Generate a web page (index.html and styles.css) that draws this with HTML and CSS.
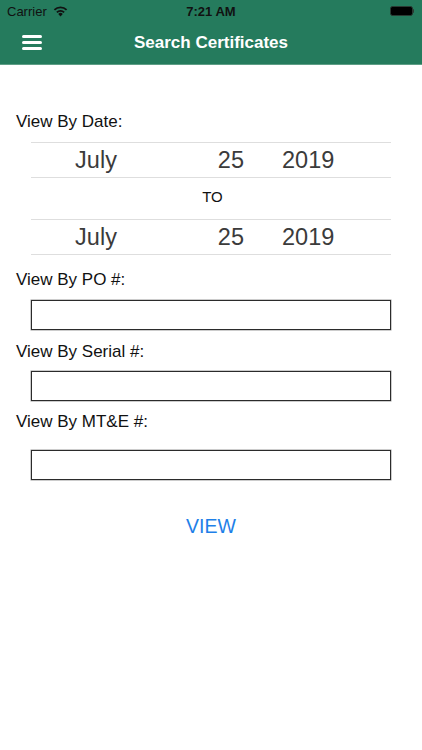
FILE: index.html
```html
<!DOCTYPE html>
<html lang="en">
<head>
    <meta charset="UTF-8">
    <meta name="viewport" content="width=device-width, initial-scale=1.0">
    <title>Search Certificates</title>
    <link rel="stylesheet" href="styles.css">
</head>
<body>

    <!-- Green header with status bar and nav -->
    <header class="app-header">
        <div class="status-bar">
            <div class="carrier">
                Carrier
                <svg class="wifi" width="15" height="11" viewBox="0 0 14 10">
                    <path d="M7 9.6 L4.9 7.3 A3 3 0 0 1 9.1 7.3 Z" fill="#111"/>
                    <path d="M3.6 5.9 A4.9 4.9 0 0 1 10.4 5.9" stroke="#111" stroke-width="1.7" fill="none"/>
                    <path d="M1.3 3.5 A8.2 8.2 0 0 1 12.7 3.5" stroke="#111" stroke-width="1.7" fill="none"/>
                </svg>
            </div>
            <div class="time">7:21 AM</div>
            <div class="battery">
                <span class="battery-body"></span>
                <span class="battery-nub"></span>
            </div>
        </div>
        <nav class="nav-bar">
            <button class="menu-button" type="button">
                <span></span><span></span><span></span>
            </button>
            <h1>Search Certificates</h1>
        </nav>
    </header>

    <main class="search-form">
        <p class="field-label date-label">View By Date:</p>

        <div class="date-picker">
            <div class="picker-row">
                <span class="month">July</span>
                <span class="day">25</span>
                <span class="year">2019</span>
            </div>
            <div class="picker-to">TO</div>
            <div class="picker-row">
                <span class="month">July</span>
                <span class="day">25</span>
                <span class="year">2019</span>
            </div>
        </div>

        <p class="field-label po-label">View By PO #:</p>
        <input class="text-box" type="text">

        <p class="field-label serial-label">View By Serial #:</p>
        <input class="text-box" type="text">

        <p class="field-label mte-label">View By MT&amp;E #:</p>
        <input class="text-box" type="text">

        <button class="view-button" type="button">VIEW</button>
    </main>

</body>
</html>
```

FILE: styles.css
```css
/* Basic reset */
* {
    margin: 0;
    padding: 0;
    box-sizing: border-box;
}

body {
    font-family: 'Liberation Sans', Arial, sans-serif;
    background-color: #fff;
    color: #000;
    width: 422px;
    height: 750px;
    overflow: hidden;
}

/* Header */
.app-header {
    background-color: #257B5D;
    height: 65px;
    border-bottom: 1px solid #5e9e86;
}

.status-bar {
    height: 22px;
    display: grid;
    grid-template-columns: 1fr auto 1fr;
    align-items: center;
    padding: 0 7px;
    font-size: 13px;
    color: #111;
}

.carrier {
    display: flex;
    align-items: center;
    gap: 6px;
}

.time {
    font-weight: bold;
    font-size: 13px;
}

.battery {
    justify-self: end;
    display: flex;
    align-items: center;
    padding-right: 1px;
}

.battery-body {
    width: 23px;
    height: 10px;
    background-color: #000;
    border: 1px solid #2a3a33;
    border-radius: 2.5px;
}

.battery-nub {
    width: 1.5px;
    height: 4px;
    background-color: #2a3a33;
    border-radius: 0 1px 1px 0;
}

.nav-bar {
    height: 42px;
    display: flex;
    align-items: center;
    justify-content: center;
    position: relative;
}

.nav-bar h1 {
    color: #fff;
    font-size: 17px;
    font-weight: bold;
    margin-top: 0;
}

/* Hamburger sits over the bar on the left */
.menu-button {
    position: absolute;
    left: 22px;
    top: 13px;
    width: 20px;
    display: flex;
    flex-direction: column;
    gap: 3px;
    background: none;
    border: none;
}

.menu-button span {
    display: block;
    height: 3px;
    background-color: #fff;
    border-radius: 1.5px;
}

/* Form area */
.search-form {
    padding: 0 31px 0 16px;
    display: flex;
    flex-direction: column;
}

.field-label {
    font-size: 17px;
    line-height: 20px;
    color: #111;
}

.date-label {
    margin-top: 47px;
}

.date-picker {
    margin: 10px 0 0 15px;
}

.picker-row {
    display: grid;
    grid-template-columns: 130px 83px 1fr;
    height: 36px;
    align-items: center;
    border-top: 1px solid #dedede;
    border-bottom: 1px solid #dedede;
    font-size: 23.5px;
    color: #3b3b3b;
}

.picker-row .month {
    text-align: center;
}

.picker-row .day {
    text-align: right;
}

.picker-row .year {
    padding-left: 38px;
}

.picker-to {
    height: 41px;
    display: flex;
    align-items: center;
    justify-content: center;
    font-size: 15px;
    color: #111;
    margin: -2px 0 2px 3px;
}

.po-label {
    margin-top: 15px;
}

.text-box {
    margin: 10px 0 0 15px;
    height: 30px;
    border: 1px solid #2b2b2b;
    box-shadow: 0 0 0 0.5px #9a9a9a;
    font-size: 16px;
    padding: 0 6px;
    background-color: #fff;
    outline: none;
}

.serial-label {
    margin-top: 12px;
}

.serial-label + .text-box {
    margin-top: 9px;
}

.mte-label {
    margin-top: 11px;
}

.mte-label + .text-box {
    margin-top: 18px;
}

.view-button {
    margin: 34px 0 0 15px;
    background: none;
    border: none;
    font-family: 'Liberation Sans', Arial, sans-serif;
    font-size: 19.5px;
    line-height: 24px;
    color: #1E80E8;
    cursor: pointer;
}
```
